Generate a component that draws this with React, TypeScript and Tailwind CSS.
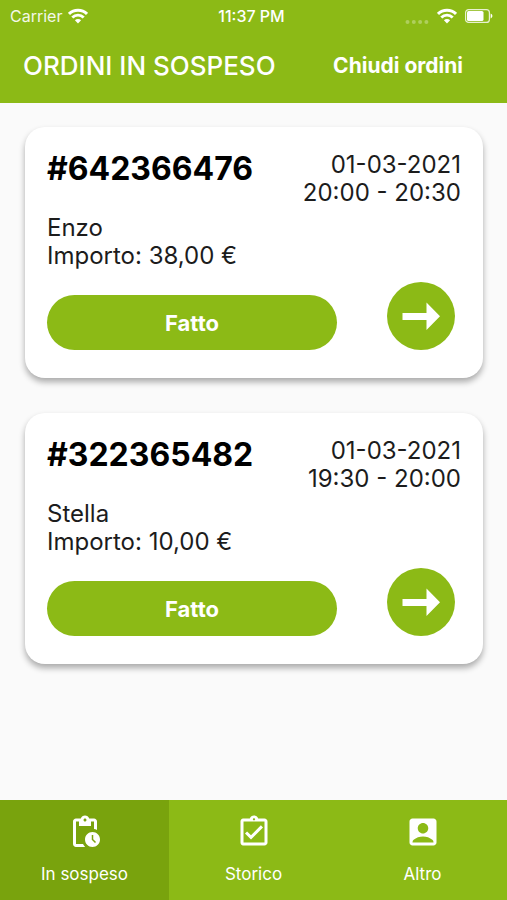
import React from "react";
import { MdAccountBox, MdOutlineAssignmentTurnedIn, MdPendingActions } from "react-icons/md";

const orders = [
  { id: "642366476", date: "01-03-2021", slot: "20:00 - 20:30", name: "Enzo", amount: "38,00 €" },
  { id: "322365482", date: "01-03-2021", slot: "19:30 - 20:00", name: "Stella", amount: "10,00 €" },
];

const tabs = [
  { label: "In sospeso", icon: MdPendingActions, active: true },
  { label: "Storico", icon: MdOutlineAssignmentTurnedIn, active: false },
  { label: "Altro", icon: MdAccountBox, active: false },
];

function WifiIcon() {
  return (
    <svg viewBox="0 0 20 15" className="w-5 h-4" fill="none" stroke="currentColor" strokeWidth="2.9" aria-hidden="true">
      <path d="M1 5.4a12.8 12.8 0 0 1 18 0" />
      <path d="M4.3 9a8.1 8.1 0 0 1 11.4 0" />
      <path d="M10 15 6.9 11.8a4.4 4.4 0 0 1 6.2 0Z" fill="currentColor" stroke="none" />
    </svg>
  );
}

function BatteryIcon() {
  return (
    <svg viewBox="0 0 28 14" className="w-7 h-3.5" fill="none" aria-hidden="true">
      <rect x="0.6" y="0.6" width="23.8" height="12.8" rx="3" stroke="currentColor" strokeWidth="1.2" opacity="0.8" />
      <rect x="2" y="2" width="16.5" height="10" rx="1.6" fill="currentColor" />
      <path d="M25.6 4.6c2.4.8 2.4 4 0 4.8Z" fill="currentColor" />
    </svg>
  );
}

function StatusBar() {
  return (
    <div className="grid grid-cols-3 items-center h-8 pl-2.5 pr-3.5 text-base">
      <div className="flex items-center gap-1.5">
        <span className="opacity-90">Carrier</span>
        <WifiIcon />
      </div>
      <span className="text-center font-medium">11:37 PM</span>
      <div className="flex items-center justify-end gap-2">
        <svg viewBox="0 0 24 16" className="w-6 h-4 opacity-30" fill="currentColor" aria-hidden="true">
          <circle cx="2.5" cy="14" r="2" />
          <circle cx="8.8" cy="14" r="2" />
          <circle cx="15.1" cy="14" r="2" />
          <circle cx="21.4" cy="14" r="2" />
        </svg>
        <WifiIcon />
        <BatteryIcon />
      </div>
    </div>
  );
}

function OrderCard({ order }: { order: (typeof orders)[number] }) {
  return (
    <article className="bg-white rounded-[20px] px-[22px] pt-6 pb-7 shadow-[0_4px_6px_rgba(0,0,0,0.32)]">
      <div className="flex justify-between items-start">
        <h2 className="text-[32px] leading-9 font-bold text-black">#{order.id}</h2>
        <div className="text-right">
          <p>{order.date}</p>
          <p>{order.slot}</p>
        </div>
      </div>
      <div className="mt-[7px]">
        <p>{order.name}</p>
        <p>Importo: {order.amount}</p>
      </div>
      <div className="flex items-end justify-between gap-[50px] mt-3 pr-[6px]">
        <button type="button" className="flex-1 h-[55px] rounded-full bg-[#8cba16] text-white text-[22px] font-bold">
          Fatto
        </button>
        <button type="button" aria-label="Apri ordine" className="size-[68px] rounded-full bg-[#8cba16] text-white">
          <svg viewBox="0 0 68 68" fill="currentColor" aria-hidden="true">
            <path d="M15.5 31h24V20.5L53 34.3 39.5 48V38h-24Z" />
          </svg>
        </button>
      </div>
    </article>
  );
}

export default function App() {
  return (
    <div className="min-h-screen flex flex-col bg-[#fafafa] text-[#1c1c1c] text-2xl leading-7 font-['Inter',sans-serif]">
      <header className="bg-[#8cba16] text-white">
        <StatusBar />
        <div className="flex items-center justify-between h-[71px] pl-[23px] pr-11 pb-1">
          <h1 className="text-[26px] font-medium">ORDINI IN SOSPESO</h1>
          <button type="button" className="text-[21px] font-bold">
            Chiudi ordini
          </button>
        </div>
      </header>

      <main className="flex-1 flex flex-col gap-[35px] pl-[25px] pr-6 py-6">
        {orders.map((order) => (
          <OrderCard key={order.id} order={order} />
        ))}
      </main>

      <nav className="grid grid-cols-3 h-[100px] bg-[#8cba16] text-white">
        {tabs.map(({ label, icon: Icon, active }) => (
          <a
            key={label}
            href="#"
            aria-current={active ? "page" : undefined}
            className={`flex flex-col items-center pt-3.5 gap-2.5 text-[17px] ${active ? "bg-[#79a30d]" : ""}`}
          >
            <Icon className="size-9" />
            <span>{label}</span>
          </a>
        ))}
      </nav>
    </div>
  );
}
